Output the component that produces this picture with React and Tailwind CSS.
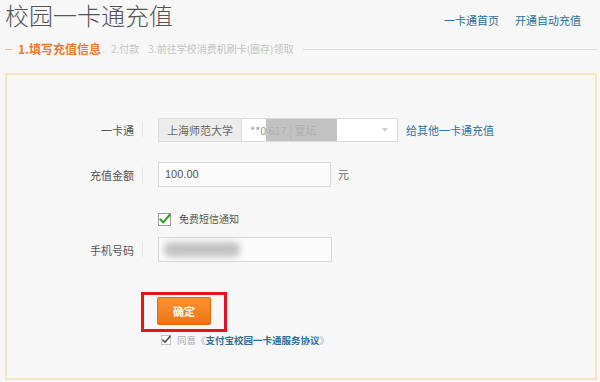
import React from "react";

const cjk = { fontFamily: '"Noto Sans CJK SC", "Noto Sans", sans-serif' };

// Green tick in a white box
const CheckIcon = ({ size = 13, tick = "#3f9b2f", box = "#9c9c9c" }) => (
  <svg width={size} height={size} viewBox="0 0 13 13">
    <rect x="0.5" y="0.5" width="12" height="12" fill="#fff" stroke={box} />
    <path d="M2.5 6.5 L5.2 9.4 L11.8 1.8" fill="none" stroke={tick} strokeWidth="2.2" strokeLinecap="round" strokeLinejoin="round" />
  </svg>
);

const FieldRow = ({ label, children, className = "" }) => (
  <div className={`flex items-center ${className}`}>
    <div className="w-[127px] text-right text-[11px] leading-[14px] text-[#555]">{label}</div>
    <div className="ml-[8px] w-px h-[16px] bg-[#e6e6e6]" />
    <div className="ml-[15px] flex items-center">{children}</div>
  </div>
);

const App = () => {
  return (
    <div className="w-[600px] h-[382px] bg-[#f7f7f7] pl-[5px] pr-[3px] overflow-hidden" style={cjk}>
      {/* Header */}
      <div className="flex items-start justify-between h-[30px]">
        <h1 className="text-[24px] leading-[30px] text-[#555] font-light whitespace-nowrap">校园一卡通充值</h1>
        <div className="flex gap-[16px] mt-[13px] mr-[16px] text-[11px] leading-[14px] text-[#2f6f98]">
          <span>一卡通首页</span>
          <span>开通自动充值</span>
        </div>
      </div>

      {/* Steps */}
      <div className="flex items-center h-[14px] mt-[12px]">
        <div className="w-[7px] h-[1px] bg-[#e9b48a]" />
        <span className="ml-[6px] text-[12px] leading-[14px] font-bold text-[#ea7a32]">1.填写充值信息</span>
        <span className="ml-[10px] text-[10px] leading-[14px] text-[#c3c3c3]">2.付款</span>
        <span className="ml-[9px] text-[10px] leading-[14px] text-[#c3c3c3]">3.前往学校消费机刷卡(圈存)领取</span>
        <div className="flex-1 h-px bg-[#dadada] ml-[10px]" />
      </div>

      {/* Form box */}
      <div className="mt-[17px] h-[307px] border-2 border-[#f5e4bf] bg-[#f7f7f7] pt-[43px]">
        <FieldRow label="一卡通">
          <div className="flex h-[24px] w-[240px] border border-[#dcdcdc] bg-white text-[11px] leading-[22px]">
            <div className="px-[8px] bg-[#ececec] border-r border-[#dcdcdc] text-[#666]">上海师范大学</div>
            <div className="flex flex-1 items-center pl-[8px] text-[#999]">
              <span>**0</span>
              <span className="h-[22px] w-[71px] bg-[#c2c2c2] text-[#b0b0b0] pl-[2px]">617 | 夏坛</span>
              <svg className="ml-auto mr-[9px]" width="6" height="4" viewBox="0 0 6 4">
                <path d="M0 0 L6 0 L3 4 Z" fill="#cfcfcf" />
              </svg>
            </div>
          </div>
          <span className="ml-[8px] text-[11px] leading-[14px] text-[#2f73a0]">给其他一卡通充值</span>
        </FieldRow>

        <FieldRow label="充值金额" className="mt-[20px]">
          <div className="h-[25px] w-[173px] border border-[#d8d8d8] bg-[#fbfbfb] pl-[6px] text-[11px] leading-[23px] text-[#555]" style={{ fontFamily: '"Liberation Sans", Arial, sans-serif' }}>
            100.00
          </div>
          <span className="ml-[7px] text-[11px] text-[#666]">元</span>
        </FieldRow>

        <div className="flex items-center mt-[25px] h-[14px] pl-[151px]">
          <CheckIcon />
          <span className="ml-[8px] text-[10px] leading-[14px] text-[#555]">免费短信通知</span>
        </div>

        <FieldRow label="手机号码" className="mt-[11px]">
          <div className="h-[25px] w-[174px] border border-[#d8d8d8] bg-[#fbfbfb] flex items-center pl-[5px]">
            <div className="h-[15px] w-[76px] rounded-[6px] bg-[#c3c3c3] blur-[3px]" />
          </div>
        </FieldRow>

        {/* Submit with red highlight */}
        <div className="mt-[30px] ml-[134px] w-[86px] h-[40px] border-[3px] border-[#e5141c] pl-[13px] pt-[2px]">
          <button className="h-[28px] w-[54px] rounded-[2px] border border-[#e06a10] bg-gradient-to-b from-[#fa9132] to-[#f07410] text-white text-[11px] font-bold leading-[26px]">
            确定
          </button>
        </div>

        <div className="flex items-center mt-[2px] ml-[154px] h-[12px]">
          <CheckIcon size={10} tick="#555" box="#b5b5b5" />
          <span className="ml-[6px] text-[9.5px] leading-[12px] text-[#aaa]">
            同意《<span className="font-bold text-[#2f6f98]">支付宝校园一卡通服务协议</span>》
          </span>
        </div>
      </div>
    </div>
  );
};

export default App;
